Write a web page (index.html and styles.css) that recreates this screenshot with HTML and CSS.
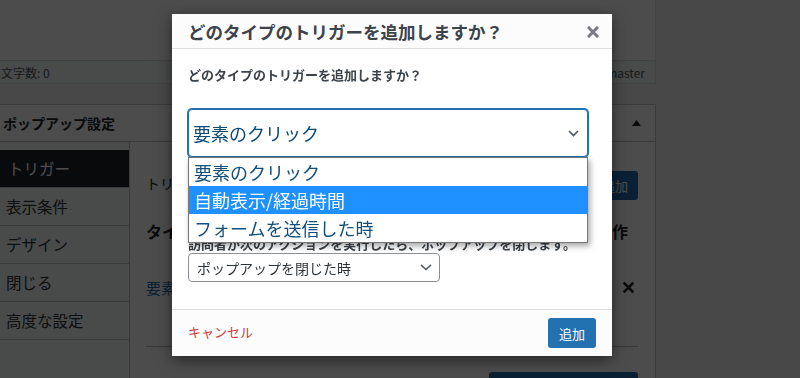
FILE: index.html
```html
<!DOCTYPE html>
<html lang="ja">
<head>
<meta charset="utf-8">
<title>ポップアップ設定</title>
<link rel="stylesheet" href="styles.css">
</head>
<body>
<div class="page">
  <div class="editor">
    <div class="editor-area"></div>
    <div class="statusbar"><span>文字数: 0</span><span>master</span></div>
  </div>
  <div class="postbox">
    <div class="postbox-header">
      <h2>ポップアップ設定</h2>
      <svg class="toggle" width="9" height="6" viewBox="0 0 9 6"><polygon points="4.5,0 9,6 0,6" fill="#1d2327"/></svg>
    </div>
    <div class="inside">
      <ul class="tabs">
        <li class="active">トリガー</li>
        <li>表示条件</li>
        <li>デザイン</li>
        <li>閉じる</li>
        <li>高度な設定</li>
      </ul>
      <div class="panel">
        <div class="panel-row">
          <span class="intro">トリガーはポップアップを開くきっかけになります。</span>
          <button class="wp-btn">トリガーを追加</button>
        </div>
        <div class="thead"><span>タイプ</span><span>クッキー</span><span class="ops">操作</span></div>
        <div class="trow">
          <a class="trow-link" href="#">要素のクリック</a>
          <svg class="remove" width="11" height="11" viewBox="0 0 11 11"><path d="M1.5 1.5 L9.5 9.5 M9.5 1.5 L1.5 9.5" stroke="#1d2327" stroke-width="2.6" stroke-linecap="square"/></svg>
        </div>
        <hr class="sep">
        <div class="panel-row bottom">
          <strong>クッキー：ポップアップの表示頻度を制限します</strong>
          <button class="wp-btn wide">クッキーを追加</button>
        </div>
      </div>
    </div>
  </div>
</div>

<div class="overlay"></div>

<div class="modal">
  <div class="modal-header">
    <h1 class="modal-title">どのタイプのトリガーを追加しますか？</h1>
    <svg class="close" width="12" height="12" viewBox="0 0 12 12"><path d="M2 2 L10 10 M10 2 L2 10" stroke="#787c82" stroke-width="3" stroke-linecap="square"/></svg>
  </div>
  <div class="modal-body">
    <div class="q-label">どのタイプのトリガーを追加しますか？</div>
    <div class="select-wrap">
      <div class="select focused">
        <span>要素のクリック</span>
        <svg width="11" height="7" viewBox="0 0 11 7"><path d="M1 1 L5.5 5.5 L10 1" fill="none" stroke="#50575e" stroke-width="1.6"/></svg>
      </div>
      <ul class="dropdown">
        <li>要素のクリック</li>
        <li class="hl">自動表示/経過時間</li>
        <li>フォームを送信した時</li>
      </ul>
    </div>
    <div class="q-label second">訪問者が次のアクションを実行したら、ポップアップを閉じます。</div>
    <div class="select small">
      <span>ポップアップを閉じた時</span>
      <svg width="12" height="7" viewBox="0 0 12 7"><path d="M1 1 L6 5.5 L11 1" fill="none" stroke="#50575e" stroke-width="1.6"/></svg>
    </div>
  </div>
  <div class="modal-footer">
    <a class="cancel" href="#">キャンセル</a>
    <button class="add-btn">追加</button>
  </div>
</div>
</body>
</html>
```

FILE: styles.css
```css
* { box-sizing: border-box; }
html, body { margin: 0; height: 100%; overflow: hidden; }
body {
  background: #f0f0f1;
  font-family: "Noto Sans CJK JP", "Noto Sans", sans-serif;
  color: #1d2327;
  position: relative;
}

/* ---------- background page ---------- */
.page { width: 657px; margin-left: -1px; }

.editor {
  height: 84px;
  border: 1px solid #dcdcde;
  border-top: 0;
  background: #fff;
  display: flex;
  flex-direction: column;
}
.editor-area { height: 60px; }
.statusbar {
  height: 23px;
  border-top: 1px solid #dcdcde;
  display: flex;
  justify-content: space-between;
  align-items: center;
  padding: 0 10px 0 1px;
  font-size: 12px;
  color: #50575e;
  background: #f6f7f7;
}

.postbox {
  margin-top: 20px;
  border: 1px solid #c3c4c7;
  background: #fff;
}
.postbox-header {
  height: 37px;
  border-bottom: 1px solid #c3c4c7;
  display: flex;
  align-items: center;
  justify-content: space-between;
  padding: 0 14px 0 3px;
}
.postbox-header h2 { margin: 0; font-size: 14px; font-weight: 700; line-height: 20px; }

.inside { display: flex; }
.tabs {
  width: 130px;
  margin: 0;
  padding: 8px 0 0;
  list-style: none;
  border-right: 1px solid #c3c4c7;
  background: #f6f7f7;
  min-height: 300px;
}
.tabs li {
  height: 38px;
  line-height: 37px;
  border-bottom: 1px solid #c3c4c7;
  padding-left: 6px;
  font-size: 15.5px;
  color: #2c3338;
}
.tabs li.active { background: #1d2327; color: #fff; padding-left: 8px; }

.panel { flex: 1; padding: 29px 17px 0 16px; }
.panel-row {
  display: flex;
  justify-content: space-between;
  align-items: center;
  height: 29px;
}
.intro { font-size: 14px; padding-bottom: 6px; }
.wp-btn {
  background: #2271b1;
  color: #fff;
  border: 0;
  border-radius: 3px;
  font-family: inherit;
  font-size: 13px;
  height: 29px;
  padding: 0 10px;
}
.wp-btn.wide { width: 152px; height: 30px; }
.thead {
  display: flex;
  justify-content: space-between;
  margin-top: 19px;
  font-weight: 700;
  font-size: 16px;
  line-height: 24px;
}
.thead .ops { padding-right: 10px; }
.trow {
  display: flex;
  justify-content: space-between;
  align-items: center;
  margin-top: 32px;
  height: 24px;
}
.trow-link { color: #2271b1; text-decoration: none; font-size: 15px; }
.remove { margin-right: 4px; }
.sep { margin: 47px 0 0; border: 0; border-top: 1px solid #c3c4c7; height: 0; }
.panel-row.bottom { margin-top: 25px; align-items: flex-start; height: 30px; }
.panel-row.bottom strong { font-size: 16px; line-height: 24px; margin-top: 4px; }

/* ---------- overlay ---------- */
.overlay {
  position: fixed;
  inset: 0;
  background: rgba(0, 0, 0, 0.7);
}

/* ---------- modal ---------- */
.modal {
  position: absolute;
  left: 172px;
  top: 14px;
  width: 440px;
  height: 342px;
  background: #fff;
  box-shadow: 0 4px 14px rgba(0, 0, 0, 0.5);
  display: flex;
  flex-direction: column;
}
.modal-header {
  height: 35px;
  background: #fcfcfc;
  border-bottom: 1px solid #dddddd;
  display: flex;
  align-items: center;
  justify-content: space-between;
  padding: 2px 13px 0 16px;
}
.modal-title {
  margin: 0;
  font-size: 17.5px;
  font-weight: 700;
  line-height: 24px;
  color: #3c434a;
}
.modal-body { flex: 1; padding: 17px 16px 0; }
.q-label {
  font-size: 13px;
  font-weight: 600;
  line-height: 18px;
  color: #3c434a;
}
.q-label.second { margin-top: 78px; }
.select-wrap { position: relative; margin-top: 25px; width: 400px; }
.select {
  display: flex;
  align-items: center;
  justify-content: space-between;
  background: #fff;
  border-radius: 4px;
}
.select.focused {
  width: 400px;
  height: 48px;
  border: 1px solid #2271b1;
  box-shadow: 0 0 0 1px #2271b1;
  padding: 0 8px 0 4px;
  font-size: 18px;
  color: #0a4b78;
}
.select.small {
  width: 252px;
  height: 29px;
  border: 1px solid #8c8f94;
  padding: 0 7px 0 8px;
  font-size: 14px;
  color: #2c3338;
}
.dropdown {
  position: absolute;
  top: 100%;
  left: 0;
  width: 400px;
  margin: 0;
  padding: 0;
  list-style: none;
  background: #fff;
  border: 1px solid #767676;
  box-shadow: 2px 3px 6px rgba(0, 0, 0, 0.35);
}
.dropdown li {
  height: 28px;
  line-height: 28px;
  padding-left: 5px;
  font-size: 18px;
  color: #124f7c;
}
.dropdown li.hl { background: #1e90ff; color: #fff; }

.modal-footer {
  height: 47px;
  border-top: 1px solid #dddddd;
  background: #fcfcfc;
  display: flex;
  align-items: center;
  justify-content: space-between;
  padding: 0 16px;
}
.cancel { color: #cc3a3c; text-decoration: none; font-size: 13px; margin-top: -3px; }
.add-btn {
  width: 48px;
  height: 30px;
  background: #2271b1;
  color: #fff;
  border: 0;
  border-radius: 3px;
  font-family: inherit;
  font-size: 13px;
  padding: 0;
}
```
